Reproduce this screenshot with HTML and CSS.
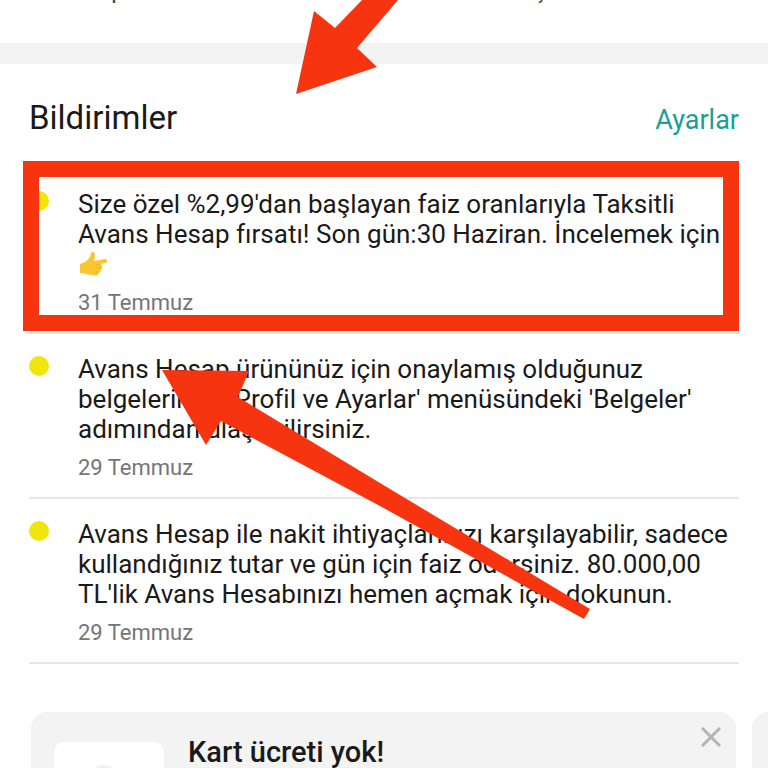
FILE: index.html
```
<!DOCTYPE html>
<html lang="tr">
<head>
    <meta charset="UTF-8">
    <meta name="viewport" content="width=device-width, initial-scale=1.0">
    <title>Bildirimler</title>
    <link rel="stylesheet" href="styles.css">
</head>
<body>
    <!-- Üst menü -->
    <nav class="shortcuts">
        <span class="shortcut">Hesap</span>
        <span class="shortcut">İşlem</span>
    </nav>

    <main>
        <section class="notifications">
            <div class="section-header">
                <h1>Bildirimler</h1>
                <a href="#" class="settings-link">Ayarlar</a>
            </div>

            <ul class="notification-list">
                <li class="notification highlighted">
                    <span class="dot"></span>
                    <div class="notification-body">
                        <p>Size özel %2,99'dan başlayan faiz oranlarıyla Taksitli Avans Hesap fırsatı! Son gün:30 Haziran. İncelemek için
                            <svg class="hand" viewBox="0 0 30 26" aria-hidden="true">
                                <path fill="#fbc62f" d="M2 13 C6 12 9 10 12 6 L13 2 C14 0 17 1 17 4 C17 7 16 8 16 10 L27 8 C30 8 30 12 27 12 L22 13 C25 14 25 17 23 17 C24 18 23 21 21 21 C21 24 18 25 15 24 C10 24 6 22 2 22 Z"/>
                                <path fill="none" stroke="#eeb01f" stroke-width="1" stroke-linecap="round" d="M22 13 L18 14 M23 17 L19 17 M21 21 L18 21"/>
                            </svg>
                        </p>
                        <time>31 Temmuz</time>
                    </div>
                </li>
                <li class="notification">
                    <span class="dot"></span>
                    <div class="notification-body">
                        <p>Avans Hesap ürününüz için onaylamış olduğunuz belgelerinize 'Profil ve Ayarlar' menüsündeki 'Belgeler' adımından ulaşabilirsiniz.</p>
                        <time>29 Temmuz</time>
                    </div>
                </li>
                <li class="notification">
                    <span class="dot"></span>
                    <div class="notification-body">
                        <p>Avans Hesap ile nakit ihtiyaçlarınızı karşılayabilir, sadece kullandığınız tutar ve gün için faiz ödersiniz. 80.000,00 TL'lik Avans Hesabınızı hemen açmak için dokunun.</p>
                        <time>29 Temmuz</time>
                    </div>
                </li>
            </ul>
        </section>

        <!-- Kampanya kartları -->
        <section class="cards">
            <article class="card">
                <div class="thumb">
                    <svg viewBox="0 0 40 20" aria-hidden="true"><path fill="#f0f0f0" d="M2 20 C6 6 14 3 20 3 C28 3 33 8 36 20 Z"/></svg>
                </div>
                <h2>Kart ücreti yok!</h2>
                <button class="close" aria-label="Kapat">
                    <svg viewBox="0 0 20 20" aria-hidden="true"><path fill="none" stroke="#b5b5b5" stroke-width="3" d="M1 1 L19 19 M19 1 L1 19"/></svg>
                </button>
            </article>
            <article class="card"></article>
        </section>
    </main>

    <!-- Kırmızı oklar -->
    <svg class="arrows" width="768" height="768" viewBox="0 0 768 768" aria-hidden="true">
        <path d="M296 94 L314 11 L335 28 L362 0 L398 0 L357 48 L377 67 Z"/>
        <path d="M162 370 L249 371 L238 397 L380 483 L590 609 L584 619 L380 506 L221 421 L206 445 Z"/>
    </svg>
</body>
</html>
```
FILE: styles.css
```
* {
    box-sizing: border-box;
}

body {
    margin: 0;
    height: 100vh;
    overflow: hidden;
    position: relative;
    background: #ffffff;
    color: #1a1a1a;
    font-family: Roboto, "Liberation Sans", sans-serif;
}

h1, h2, p, ul {
    margin: 0;
    padding: 0;
    font-weight: 400;
}

.shortcuts {
    display: grid;
    grid-template-columns: 2fr 1fr;
    align-content: end;
    height: 64px;
    padding: 0 6px 39px 56px;
    border-bottom: 21px solid #f3f3f3;
    overflow: hidden;
    font-size: 24px;
    line-height: 28px;
}

.shortcut {
    color: #444444;
}

.notifications {
    padding: 32px 29px 0;
}

.section-header {
    display: flex;
    justify-content: space-between;
    align-items: baseline;
    height: 73px;
}

h1 {
    font-size: 33px;
    line-height: 43px;
}

.settings-link {
    color: #1a9e96;
    font-size: 27px;
    text-decoration: none;
}

.notification-list {
    list-style: none;
}

.notification {
    position: relative;
    display: flex;
    gap: 29px;
    height: 165px;
    padding-top: 20px;
    border-bottom: 2px solid #e6e6e6;
}

.dot {
    flex: none;
    width: 20px;
    height: 20px;
    margin-top: 2px;
    border-radius: 50%;
    background: #f0e60c;
}

.notification-body {
    flex: 1;
}

.notification p {
    min-height: 90px;
    font-size: 26px;
    line-height: 30px;
}

.notification time {
    display: block;
    margin-top: 9px;
    color: #757575;
    font-size: 22px;
    line-height: 30px;
}

.hand {
    display: block;
    width: 30px;
    height: 26px;
    margin-top: 2px;
}

.highlighted::after {
    content: "";
    position: absolute;
    top: -8px;
    right: 0;
    bottom: 1px;
    left: -6px;
    border: 16px solid #f63410;
}

.cards {
    display: flex;
    gap: 16px;
    padding: 48px 0 0 31px;
}

.card {
    display: flex;
    flex: none;
    gap: 24px;
    width: calc(100% - 32px);
    height: 180px;
    padding: 15px 15px 0 23px;
    border-radius: 16px;
    background: #f3f3f3;
}

.thumb {
    width: 110px;
    height: 110px;
    margin-top: 15px;
    padding: 20px 30px;
    border-radius: 10px;
    background: #ffffff;
}

.thumb svg {
    display: block;
    width: 40px;
    height: 20px;
}

h2 {
    flex: 1;
    margin-top: 8px;
    font-size: 29px;
    font-weight: 500;
    line-height: 34px;
}

.close {
    width: 20px;
    height: 20px;
    padding: 0;
    border: 0;
    background: none;
    cursor: pointer;
}

.close svg {
    display: block;
}

.arrows {
    position: absolute;
    top: 0;
    left: 0;
    fill: #f63410;
    pointer-events: none;
}
```
